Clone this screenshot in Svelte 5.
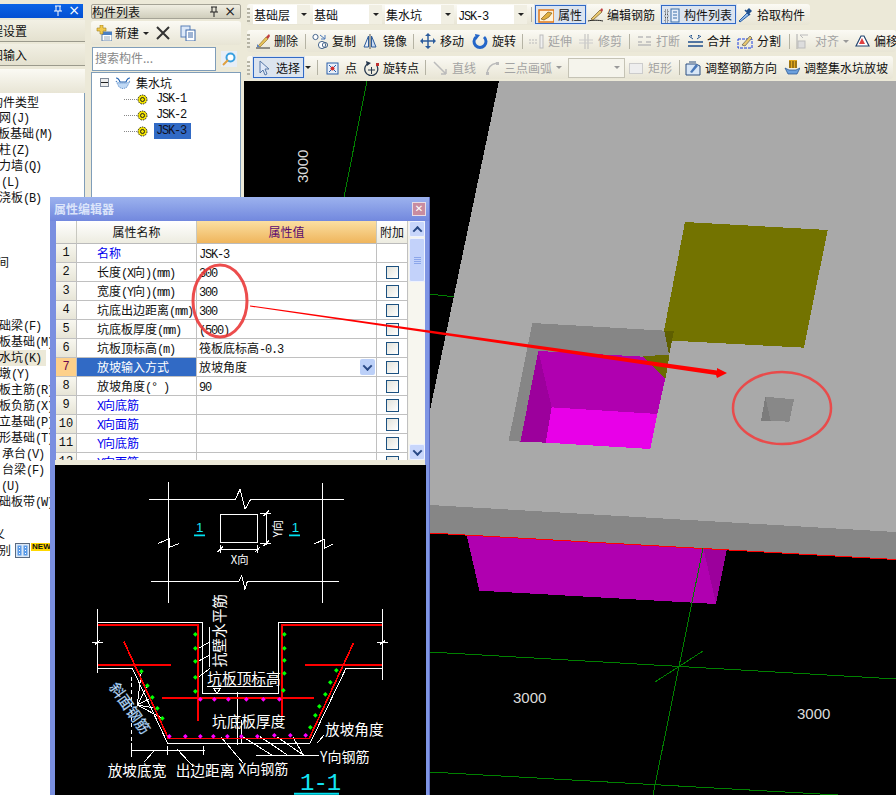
<script>
  const icons = {
    del: '<path d="M2 15h14" stroke="#333"/><path d="M4 13l8-9 2 2-8 8z" fill="#e6c25a" stroke="#8a6a20" stroke-width=".6"/><path d="M12 4l3-3 1 2-2 3z" fill="#c03f3f"/><path d="M3 11l3 3-3 0z" fill="#5a84c8"/>',
    copy: '<circle cx="3.5" cy="4" r="2.6" fill="#fff" stroke="#47668c"/><circle cx="10" cy="12" r="3.6" fill="#fff" stroke="#47668c"/><circle cx="13" cy="12" r="2.6" fill="none" stroke="#47668c"/><path d="M8 2l5 4M13 2v4h-4" stroke="#4a78b8" fill="none"/>',
    mirror: '<path d="M7 1v15" stroke="#555"/><path d="M5.5 3L1 14h4.5z" fill="#e8eef8" stroke="#2c5c9c"/><path d="M8.5 3l4.5 11H8.500z" fill="#c9daf2" stroke="#2c5c9c"/>',
    move: '<path d="M8 1v14M1 8h14" stroke="#2c5c9c" stroke-width="1.500"/><path d="M8 0l3 3H5zM8 16l3-3H5zM0 8l3-3v6zM16 8l-3-3v6z" fill="#2c5c9c"/>',
    rot: '<path d="M4 4a6 6 0 1 0 8 0" fill="none" stroke="#2466c8" stroke-width="3"/><path d="M3 1l5 1-4 5z" fill="#2466c8"/>',
    ext: '<path d="M1 7h8M1 10h8" stroke="#bbb" stroke-dasharray="2 1"/><rect x="12" y="2" width="3" height="13" fill="#f0f0f0" stroke="#bbb"/>',
    trim: '<path d="M7 1v15M10 1v15" stroke="#bbb"/><path d="M1 7h14M1 10h14" stroke="#ccc"/>',
    brk: '<path d="M2 4h5M10 4h5M2 12h13M2 9h4M10 9h5" stroke="#bbb" stroke-width="1.500"/>',
    merge: '<path d="M1 9h15M1 13h15" stroke="#1f4f8c" stroke-width="1.500"/><path d="M2 3l4 3M14 3l-4 3" stroke="#1f4f8c"/><path d="M3 2h2v2zM13 2h-2v2z" fill="#1f4f8c"/>',
    split: '<rect x="1" y="6" width="14" height="9" fill="none" stroke="#1a3fe0" stroke-dasharray="3 1"/><path d="M5 12l8-9 2 2-7 8z" fill="#e8c870" stroke="#444" stroke-width=".6"/>',
    align: '<path d="M2 1v15" stroke="#aaa"/><rect x="3" y="8" width="7" height="7" fill="#ddd" stroke="#bbb"/><path d="M5 2h8M5 2l3 3" stroke="#bbb" fill="none"/>',
    offset: '<path d="M2 13l5-10h3l5 10z" fill="#fff" stroke="#23446e" stroke-width="1.200"/><path d="M5 11l3-6 3 6z" fill="#e04040"/>',
    select: '<path d="M4 1v12l3-3 2 5 2-1-2-5h4z" fill="#dfe8f8" stroke="#5878a8"/>',
    point: '<rect x="2" y="3" width="11" height="11" fill="#e8f0fa" stroke="#2a5ea8"/><path d="M4 5l7 7M11 5l-7 7" stroke="#2a5ea8"/><circle cx="7.500" cy="8.500" r="2" fill="#d03030"/>',
    rotp: '<path d="M6 3a6.500 6.500 0 1 0 8 3" fill="none" stroke="#26384e" stroke-width="1.300"/><path d="M3 1l5 2-4 3z" fill="#26384e"/><path d="M5 10h7M8.500 7v7" stroke="#26384e"/><rect x="13" y="3" width="3" height="3" fill="#c03030"/>',
    line: '<path d="M2 2l12 12M14 14V9M14 14H9" stroke="#bbb" stroke-width="1.500" fill="none"/>',
    arc: '<path d="M3 15C3 8 7 4 13 3" stroke="#bbb" stroke-width="1.500" fill="none"/><rect x="2" y="12" width="3" height="3" fill="#bbb"/><rect x="12" y="2" width="3" height="3" fill="#bbb"/>',
    rect: '<rect x="1.500" y="3.500" width="13" height="10" fill="#eee" stroke="#ccc"/>',
    adj: '<path d="M1 4h10l4 2v9H1z" fill="#d8e6f6" stroke="#2d4f80"/><path d="M5 12l6-8 2 2-6 7z" fill="#4a78b8"/><path d="M4 2h7" stroke="#2d4f80"/>',
    pit: '<path d="M5 0h8v8H5z" fill="#e0a820"/><path d="M6 1v7M9 1v7M12 1v7" stroke="#594008"/><path d="M1 8l3 6h9l3-6-4 2H5z" fill="#6ca0dc" stroke="#1f4f8c" stroke-width=".7"/>',
    prop: '<rect x="1" y="3" width="15" height="12" fill="#fff2d8" stroke="#e07818" stroke-width="1.500"/><path d="M3 12l7-7 4 1-3 4-5 3z" fill="#e0b040" stroke="#6a4a10" stroke-width=".6"/>',
    edit: '<path d="M1 14c3-1 11-1 15 0" stroke="#222" fill="none"/><path d="M4 12l9-9 2 2-9 8z" fill="#e8c870" stroke="#5a4010" stroke-width=".6"/><path d="M13 3l2-2 1 2-1 2z" fill="#c04040"/>',
    list: '<rect x="7" y="2" width="8" height="13" fill="#e6eef9" stroke="#3b6ea8"/><path d="M9 5h4M9 8h4M9 11h4" stroke="#3b6ea8"/><path d="M1 3h3v3H1zM1 7.500h3v3H1zM1 12h3v3H1z" fill="none" stroke="#555" stroke-dasharray="1 1"/>',
    pick: '<path d="M3 15l-1-1 8-8 2 2z" fill="#90b8e8" stroke="#2860a8"/><path d="M9 4l3 3 3-3-3-3z" fill="#1f4f8c"/><path d="M8 3l5 5" stroke="#1f4f8c" stroke-width="1.500"/>',
    newb: '<rect x="6" y="7" width="10" height="9" fill="#fff" stroke="#5c7fa8"/><rect x="6" y="7" width="10" height="3" fill="#4a7fc4"/><path d="M8 12h6M8 14h6" stroke="#9ab"/><path d="M4 0h3v3h3v3H7v3H4V6H1V3h3z" fill="#f2c94c" stroke="#a08020" stroke-width=".6"/>',
    x: '<path d="M2 2l12 12M14 2L2 14" stroke="#333" stroke-width="2"/>',
    dup: '<rect x="1" y="1" width="9" height="11" fill="#dce8f8" stroke="#5a80b8"/><rect x="6" y="5" width="9" height="11" fill="#fff" stroke="#3c68a8"/><path d="M8 8h5M8 10h5M8 12h5" stroke="#3c68a8"/>',
    mag: '<rect width="16" height="16" fill="#e8eef6"/><circle cx="9.500" cy="6.500" r="4" fill="#fff" stroke="#39a0e0" stroke-width="2"/><path d="M7 9l-5 5" stroke="#e0a040" stroke-width="2"/>',
    sump: '<path d="M1 3c2 0 3 1 4 4h6c1-3 2-4 4-4" fill="none" stroke="#2060b0" stroke-width="1.200"/><path d="M1 6l3 6c3 2 5 2 8 0l3-6-3 2H4z" fill="#bfd8f4" stroke="#2060b0" stroke-width=".7" stroke-dasharray="1 1"/>',
    gear: '<circle cx="5.500" cy="5.500" r="4.500" fill="#f2e200" stroke="#222" stroke-dasharray="1.500 1"/><circle cx="5.500" cy="5.500" r="2" fill="none" stroke="#222"/>',
    pin: '<path d="M3 1h6M4 1v5M8 1v5M2 6h8M6 6v5" stroke="currentColor" fill="none"/>'
  };

  function seg(s) {
    return s.split(/([\x00-\x7f°]+)/).filter(Boolean).map((p) => ({ p, la: /^[\x00-\x7f°]/.test(p) }));
  }
  function widths(row, end) {
    return row.map((it, i) => ({ ...it, w: (row[i + 1] ? row[i + 1].x : end) - it.x }));
  }

  const row1 = widths([
    { x: 247, grip: 1 },
    { x: 253, sel: '基础层' }, { x: 313, sel: '基础' }, { x: 385, sel: '集水坑' }, { x: 457, sel: 'JSK-3' },
    { x: 530, sep: 1 },
    { x: 534, i: 'prop', t: '属性', on: 1 }, { x: 587, i: 'edit', t: '编辑钢筋' },
    { x: 660, i: 'list', t: '构件列表', on: 1 }, { x: 737, i: 'pick', t: '拾取构件' }
  ], 810);
  const row2 = widths([
    { x: 247, grip: 1 },
    { x: 254, i: 'del', t: '删除' }, { x: 304, sep: 1 }, { x: 312, i: 'copy', t: '复制' },
    { x: 363, i: 'mirror', t: '镜像' }, { x: 412, sep: 1 }, { x: 420, i: 'move', t: '移动' },
    { x: 472, i: 'rot', t: '旋转' }, { x: 521, sep: 1 }, { x: 528, i: 'ext', t: '延伸', d: 1 },
    { x: 578, i: 'trim', t: '修剪', d: 1 }, { x: 628, sep: 1 }, { x: 636, i: 'brk', t: '打断', d: 1 },
    { x: 687, i: 'merge', t: '合并' }, { x: 737, i: 'split', t: '分割' }, { x: 788, sep: 1 },
    { x: 795, i: 'align', t: '对齐', d: 1, dd: 1 }, { x: 854, i: 'offset', t: '偏移' }
  ], 910);
  const row3 = widths([
    { x: 247, grip: 1 },
    { x: 252, i: 'select', t: '选择', on: 1 }, { x: 305, dd: 1 }, { x: 316, sep: 1 },
    { x: 325, i: 'point', t: '点' }, { x: 363, i: 'rotp', t: '旋转点' }, { x: 424, sep: 1 },
    { x: 432, i: 'line', t: '直线', d: 1 }, { x: 484, i: 'arc', t: '三点画弧', d: 1 }, { x: 556, dd: 1, d: 1 },
    { x: 568, box: 1 }, { x: 628, i: 'rect', t: '矩形', d: 1 }, { x: 678, sep: 1 },
    { x: 685, i: 'adj', t: '调整钢筋方向' }, { x: 784, i: 'pit', t: '调整集水坑放坡' }
  ], 893);
  const rows = [row1, row2, row3];

  const sideRows = [
    { t: '构件类型', off: -9 }, { t: '网(J)' }, { t: '板基础(M)', off: -2 }, { t: '柱(Z)' }, { t: '力墙(Q)' },
    { t: '(L)', off: 1 }, { t: '浇板(B)' }, {}, {}, {}, { t: '间', off: -3 }, {}, {}, {},
    { t: '础梁(F)' }, { t: '板基础(M)', off: -1 }, { t: '水坑(K)', cur: 1 }, { t: '墩(Y)' },
    { t: '板主筋(R)' }, { t: '板负筋(X)' }, { t: '立基础(P)' }, { t: '形基础(T)' }, { t: '承台(V)', off: 2 },
    { t: '台梁(F)', off: 2 }, { t: '(U)', off: 1 }, { t: '础板带(W)', off: -1 }, {}, { t: '义', off: -7 }, { t: '别', off: -1, extra: 1 }
  ];

  const props = [
    ['名称', 'JSK-3', 1, 0], ['长度(X向)(mm)', '300', 0, 1], ['宽度(Y向)(mm)', '300', 0, 1],
    ['坑底出边距离(mm)', '300', 0, 1], ['坑底板厚度(mm)', '(500)', 0, 1], ['坑板顶标高(m)', '筏板底标高-0.3', 0, 1],
    ['放坡输入方式', '放坡角度', 0, 1], ['放坡角度(° )', '90', 0, 1], ['X向底筋', '', 1, 1],
    ['X向面筋', '', 1, 1], ['Y向底筋', '', 1, 1], ['Y向面筋', '', 1, 1]
  ];

  const greens = [[436,523],[436,565],[436,604],[436,652],[436,694],[703,523],[703,565],[703,601],[703,640],[700,691],[274,634],[292,677],[307,712],[322,745],[337,775],[859,631],[841,667],[826,703],[808,739],[796,766],[781,802]];
  const pinks = [[451,718],[493,718],[535,718],[589,718],[640,718],[688,718],[358,829],[406,829],[451,829],[490,829],[532,829],[574,829],[622,829],[673,826],[721,826],[767,826]];
</script>

<div class="root">
  <section class="side">
    <div class="ptitle blue">
      <svg class="pin" viewBox="0 0 12 12">{@html icons.pin}</svg><span class="cl">×</span>
    </div>
    <div class="navbtn"><span class="offa">工程设置</span></div>
    <div class="navbtn"><span class="offa">绘图输入</span></div>
    <div class="sidebar-strip"></div>
    <div class="sidelist">
      {#each sideRows as r}
        <div class="srow" class:cur={r.cur}>
          {#if r.t}
            <span class="stext" style="margin-left:{r.off ?? -1}px">
              {#each seg(r.t) as s}<span class:la={s.la}>{s.p}</span>{/each}
            </span>
          {/if}
          {#if r.extra}
            <svg class="grid-ic" width="15" height="15" viewBox="0 0 15 15"><rect x=".5" y=".5" width="14" height="14" fill="#dce8f6" stroke="#5a6a80"/><rect x="2.500" y="2.500" width="4" height="10" fill="#5b9be8"/><rect x="8.500" y="2.500" width="4" height="10" fill="#5b9be8"/><path d="M4.500 4v7M10.500 4v7" stroke="#fff" stroke-dasharray="1 2"/></svg>
            <span class="newtag">NEW</span>
          {/if}
        </div>
      {/each}
    </div>
  </section>

  <section class="mid">
    <div class="ptitle grey">
      <span class="ptext">构件列表</span><svg class="pin dark" viewBox="0 0 12 12">{@html icons.pin}</svg><span class="cl dark">×</span>
    </div>
    <div class="midbar">
      <svg class="ic" viewBox="0 0 16 16">{@html icons.newb}</svg>
      <span class="newl">新建</span><span class="tri dk"></span>
      <svg class="ic x" viewBox="0 0 16 16">{@html icons.x}</svg>
      <svg class="ic" viewBox="0 0 16 16">{@html icons.dup}</svg>
    </div>
    <div class="searchrow">
      <div class="search">搜索构件...</div>
      <svg class="ic" viewBox="0 0 16 16">{@html icons.mag}</svg>
    </div>
    <div class="tree">
      <div class="troot">
        <span class="minus"></span>
        <svg class="ic" viewBox="0 0 16 16">{@html icons.sump}</svg>
        <span class="trl">集水坑</span>
      </div>
      {#each ['JSK-1', 'JSK-2', 'JSK-3'] as n, i}
        <div class="tchild">
          <span class="dots"></span>
          <svg class="gear" viewBox="0 0 11 11">{@html icons.gear}</svg>
          <span class="tname la" class:sel={i === 2}>{n}</span>
        </div>
      {/each}
    </div>
  </section>

  <section class="main">
    <div class="bars">
      {#each rows as row, ri}
        <div class="tbar r{ri}">
          {#each row as it}
            <div class="item" class:on={it.on} class:dis={it.d} style="width:{it.w}px">
              {#if it.grip}
                <span class="grip"></span>
              {:else if it.sep}
                <span class="sep"></span>
              {:else if it.sel}
                <span class="sel-box">
                  <span class="sel-t">{#each seg(it.sel) as s}<span class:la={s.la}>{s.p}</span>{/each}</span>
                  <span class="sel-a"><span class="tri dk"></span></span>
                </span>
              {:else if it.box}
                <span class="blank"><span class="tri"></span></span>
              {:else}
                {#if it.i}<svg class="ic" viewBox="0 0 16 16">{@html icons[it.i]}</svg>{/if}
                {#if it.t}<span class="lbl">{it.t}</span>{/if}
                {#if it.dd}<span class="tri" class:dk={!it.d}></span>{/if}
              {/if}
            </div>
          {/each}
        </div>
      {/each}
    </div>
    <div class="canvas">
      <svg class="scene" viewBox="244 81 652 714">
        <line x1="367" y1="81" x2="344" y2="197" stroke="#008000"/>
        <line x1="430" y1="294" x2="455" y2="297" stroke="#008000"/>
        <g transform="translate(430 200) scale(.33333)">
          <polygon points="110,1005 148,1172 858,1212 890,1050" fill="#b000b0"/>
          <polygon points="820,1045 890,1050 858,1210" fill="#9c009c"/>
        </g>
        <polygon points="499,81 896,81 896,532 430,505 430,410" fill="#a9a9a9"/>
        <polygon points="430,505 896,532 896,559 430,533" fill="#868686"/>
        <line x1="430" y1="533" x2="896" y2="559.500" stroke="#ff0000"/>
        <g transform="translate(430 200) scale(.33333)">
          <polygon points="765,66 1193,90 1122,443 726,422 732,393 702,392" fill="#737300"/>
          <polygon points="702,392 732,393 717,465" fill="#5f5f00"/>
          <polygon points="307,369 703,392 717,465 640,470 325,453 272,725 236,722" fill="#868686"/>
          <polygon points="636,468 717,465 717,476 706,538" fill="#6b6b00"/>
          <polygon points="325,453 640,470 706,535 682,642 365,622" fill="#b000b0"/>
          <polygon points="365,622 682,642 661,747 347,728" fill="#e800e8"/>
          <polygon points="325,453 365,622 347,728 271,725" fill="#9c009c"/>
          <polygon points="1006,590 1092,598 1078,665 993,662" fill="#888888"/>
          <polygon points="1006,590 1022,662 993,662" fill="#7c7c7c"/>
        </g>
        <g stroke="#008000" fill="none">
          <line x1="703" y1="548" x2="653" y2="795"/>
          <line x1="430" y1="652" x2="896" y2="679"/>
          <line x1="430" y1="772" x2="838" y2="795"/>
          <line x1="655" y1="682" x2="703" y2="651"/>
        </g>
        <g class="dim">
          <text x="513" y="703">3000</text>
          <text x="797" y="719">3000</text>
          <text transform="translate(308 183) rotate(-90)">3000</text>
        </g>
      </svg>
    </div>
  </section>

  <div class="dialog">
    <div class="dtitle">
      <span>属性编辑器</span>
      <span class="dclose">✕</span>
    </div>
    <div class="dbody">
      <div class="ptable">
        <div class="phead">
          <div class="c0"></div>
          <div class="c1">属性名称</div>
          <div class="c2">属性值</div>
          <div class="c3">附加</div>
        </div>
        {#each props as p, i}
          <div class="prow" class:act={i === 6}>
            <div class="c0 la">{i + 1}</div>
            <div class="c1" class:link={p[2]}>
              {#each seg(p[0]) as s}<span class:la={s.la}>{s.p}</span>{/each}
            </div>
            <div class="c2">
              {#each seg(p[1]) as s}<span class:la={s.la}>{s.p}</span>{/each}
              {#if i === 6}<span class="ddbtn"><span class="chev"></span></span>{/if}
            </div>
            <div class="c3">{#if p[3]}<span class="chk"></span>{/if}</div>
          </div>
        {/each}
      </div>
      <div class="vsb">
        <div class="sbtn"><span class="chev up"></span></div>
        <div class="thumb"><span class="lines"></span></div>
        <div class="strack"></div>
        <div class="sbtn"><span class="chev"></span></div>
      </div>
    </div>
    <div class="dstrip"></div>
    <svg class="cad" viewBox="15 15 1113 990">
      <g fill="none" stroke="#fff" stroke-width="3" shape-rendering="crispEdges">
        <path d="M297 118H556L570 88L585 148L602 118H882"/>
        <path d="M303 364H566L575 346L585 388L592 364H867"/>
        <path d="M355 66V428M817 70V428"/>
        <path d="M325 250L358 236V262L388 250"/>
        <path d="M793 252L822 238V266L849 252"/>
        <rect x="511" y="163" width="112" height="85"/>
        <path d="M630 160H662M630 250H662M648 157V254M640 168L656 152M640 258L656 242"/>
        <path d="M511 255V280M623 255V280M506 268H628M503 276L519 260M615 276L631 260"/>
        <path d="M143 447V640M997 447V660M127 547H158M982 547H1014M135 553L150 541M990 553L1006 541"/>
        <path d="M143 488H457V700H685V488H997"/>
        <path d="M143 625H247L353 850H780L888 625H997"/>
        <path d="M470 680H668"/>
        <path d="M490 684H512L501 700Z"/>
        <path d="M562 695V855M575 780V850"/>
        <path d="M245 650V860" stroke-dasharray="12 8"/>
        <path d="M243 870H465M243 858V892M353 858V885M460 858V885"/>
        <path d="M283 906L312 872M380 866L430 920"/>
        <path d="M512 830L580 910M578 830L665 885M630 830L712 885M680 830L760 885M728 830L760 885M618 885H808"/>
        <path d="M440 568L480 545M440 606L480 585M440 655L480 625M478 500V620"/>
        <path d="M262 735L274 634M262 735L292 677M262 735L307 712M262 735L322 745M262 735L337 775"/>
        <path d="M800 850C812 838 818 830 820 826"/>
      </g>
      <g fill="none" stroke="#ff0000" stroke-width="5" shape-rendering="crispEdges">
        <path d="M143 494H443V782"/>
        <path d="M997 494H695V770"/>
        <path d="M143 614H363M765 614H997M336 714H792"/>
        <path d="M222 545L355 835H778L910 550"/>
      </g>
      {#each greens as [x, y]}<rect x={x - 5} y={y - 5} width="10" height="10" fill="#00ff00" transform="rotate(45 {x} {y})"/>{/each}
      {#each pinks as [x, y]}<rect x={x - 5} y={y - 5} width="10" height="10" fill="#ff00ff" transform="rotate(45 {x} {y})"/>{/each}

      <g class="cadt">
        <text x="542" y="312" font-size="34">X向</text>
        <text transform="translate(696 232) rotate(-90)" font-size="34">Y向</text>
        <text transform="translate(526 622) rotate(-90)" font-size="44">抗壁水平筋</text>
        <text x="472" y="672" font-size="44">坑板顶标高</text>
        <text x="486" y="800" font-size="44">坑底板厚度</text>
        <text x="825" y="824" font-size="44">放坡角度</text>
        <text x="810" y="905" font-size="42">Y向钢筋</text>
        <text x="565" y="942" font-size="42">X向钢筋</text>
        <text x="173" y="948" font-size="44">放坡底宽</text>
        <text x="377" y="948" font-size="44">出边距离</text>
      </g>
      <text class="slant" transform="translate(176 682) rotate(55)" font-size="44">斜面钢筋</text>
      <g class="cyan">
        <text x="438" y="216" font-size="40">1</text>
        <text x="725" y="216" font-size="40">1</text>
        <text class="big" x="750" y="990" font-size="72">1-1</text>
      </g>
      <path d="M432 226H465M717 226H750" stroke="#00e0f0" stroke-width="5"/>
      <path d="M732 1001H867" stroke="#00e0f0" stroke-width="6"/>
    </svg>
  </div>

  <svg class="notes" viewBox="0 0 896 795">
    <ellipse cx="220" cy="301" rx="27" ry="36" fill="none" stroke="#ea3a3a" stroke-width="3" opacity=".9"/>
    <ellipse cx="782" cy="408" rx="49" ry="36" fill="none" stroke="#f04040" stroke-width="2.500" opacity=".9"/>
    <polygon points="250,305.500 717,370.500 717,368 727,373 717,378 716,375 250,306.500" fill="#ff0000"/>
  </svg>
</div>

<style>
  :global(body) { margin: 0; }
  .root {
    position: relative;
    width: 896px;
    height: 795px;
    overflow: hidden;
    background: #ece9d8;
    display: flex;
    font: 12px/16px "Noto Sans CJK SC", "Liberation Sans", sans-serif;
    color: #111;
  }
  .la { font-family: "Liberation Mono", "DejaVu Sans Mono", monospace; font-size: 12px; letter-spacing: -1.200px; }

  .side { width: 85px; margin-right: 6px; display: flex; flex-direction: column; padding-top: 4px; box-sizing: border-box; flex: none; }
  .mid { width: 150px; margin-right: 3px; display: flex; flex-direction: column; padding-top: 4px; box-sizing: border-box; flex: none; }
  .main { flex: 1; min-width: 0; display: flex; flex-direction: column; }

  .ptitle { height: 14px; display: flex; align-items: center; position: relative; flex: none; }
  .ptitle.blue { background: linear-gradient(#0a63e6, #0450d2); margin-right: 2px; }
  .ptitle.grey { background: linear-gradient(#f0eee2, #d0cebc); border: 1px solid #a5a396; border-radius: 2px; box-sizing: border-box; height: 15px; }
  .ptext { overflow: hidden; white-space: nowrap; line-height: 13px; }
  .pin { position: absolute; right: 19px; top: 1px; width: 12px; height: 12px; color: #fff; }
  .cl { position: absolute; top: -1px; right: 3px; font: 14px/14px "DejaVu Sans", sans-serif; color: #fff; }
  .pin.dark, .cl.dark { color: #222; }
  .pin.dark { right: 20px; }
  .cl.dark { right: 4px; }

  .navbtn { height: 21px; margin: 2px 0 0; background: linear-gradient(#f2f0e4, #e4e1cf); border-bottom: 1px solid #9b9a8c; overflow: hidden; line-height: 22px; white-space: nowrap; flex: none; }
  .offa { display: block; margin-left: -21px; }
  .sidebar-strip { height: 24px; margin-top: 3px; background: linear-gradient(#fbfaf4, #e8e5d5); flex: none; }
  .sidelist { flex: 1; background: #fff; border-right: 1px solid #7f9db9; overflow: hidden; padding-top: 1px; }
  .srow { height: 16px; display: flex; align-items: center; white-space: nowrap; overflow: hidden; }
  .srow.cur { background: linear-gradient(to right, #ece9d8 46px, #fff 46px); }
  .grid-ic { margin-left: 4px; flex: none; }
  .newtag { margin: -6px 0 0 1px; background: #ffd800; color: #111; font: bold 8px/8px "Liberation Sans", sans-serif; padding: 0 1px; }

  .midbar { height: 24px; margin-top: 2px; display: flex; align-items: center; padding-left: 5px; background: linear-gradient(#fbfaf4, #e8e5d5); border-radius: 3px; flex: none; }
  .newl { margin-left: 3px; }
  .ic { width: 16px; height: 16px; flex: none; }
  .midbar .tri { margin: 0 6px 0 4px; }
  .midbar .x { margin-right: 9px; }
  .searchrow { height: 25px; margin-top: 1px; display: flex; align-items: center; gap: 5px; flex: none; }
  .search { width: 124px; height: 24px; box-sizing: border-box; background: #fff; border: 1px solid #7f9db9; color: #888; line-height: 20px; padding-left: 2px; margin-left: 1px; }
  .tree { flex: 1; background: #fff; border: 1px solid #7f9db9; border-bottom: 0; margin-top: 1px; padding-top: 1px; }
  .troot { display: flex; align-items: center; height: 17px; padding-left: 8px; }
  .minus { width: 9px; height: 9px; box-sizing: border-box; border: 1px solid #7f8a99; background: linear-gradient(to bottom, transparent 3px, #222 3px, #222 4px, transparent 4px), #eee; margin-right: 6px; }
  .trl { margin-left: 5px; }
  .tchild { display: flex; align-items: center; height: 16px; padding-left: 32px; }
  .dots { width: 13px; border-top: 1px dotted #888; }
  .gear { width: 11px; height: 11px; margin-right: 6px; flex: none; }
  .tname { padding: 0 2px; height: 16px; line-height: 16px; }
  .tname.sel { background: #316ac5; width: 33px; color: #112; }

  .bars { height: 81px; flex: none; padding: 4px 0 0 3px; box-sizing: border-box; display: flex; flex-direction: column; }
  .tbar { display: flex; align-items: center; background: linear-gradient(#fbfaf4, #e8e5d5); border-radius: 3px; overflow: hidden; flex: none; }
  .tbar.r0 { height: 21px; width: 563px; }
  .tbar.r1 { height: 22px; margin-top: 5px; width: 649px; }
  .tbar.r2 { height: 23px; margin-top: 4px; width: 646px; }
  .item { display: flex; align-items: center; gap: 4px; height: 100%; box-sizing: border-box; flex: none; white-space: nowrap; }
  .item.on { background: #dce4ef; outline: 1px solid #316ac5; outline-offset: -2px; padding-left: 4px; }
  .item.dis { color: #a3a3a3; }
  .grip { width: 3px; height: 14px; background: repeating-linear-gradient(#b5b3a4 0 2px, transparent 2px 4px); }
  .sep { width: 1px; height: 15px; background: #b5b3a4; margin-left: 1px; }
  .sel-box { display: flex; height: 19px; width: calc(100% - 3px); background: #fff; }
  .sel-t { flex: 1; padding-left: 1px; line-height: 19px; overflow: hidden; }
  .sel-a { width: 13px; background: #f1efe3; display: flex; align-items: center; justify-content: center; }
  .blank { width: 57px; height: 20px; box-sizing: border-box; border: 1px solid #c5c3b5; background: #f5f4ec; display: flex; align-items: center; justify-content: flex-end; padding-right: 4px; }
  .tri { width: 0; height: 0; border: 3px solid transparent; border-top: 3px solid #999; border-bottom: 0; }
  .tri.dk { border-top-color: #222; }

  .canvas { flex: 1; background: #000; min-height: 0; }
  .scene { display: block; width: 100%; height: 100%; shape-rendering: crispEdges; }
  .dim text { fill: #dcdcdc; font: 15px "Liberation Sans", sans-serif; }

  .dialog { position: absolute; left: 50px; top: 197px; width: 380px; height: 598px; box-sizing: border-box; background: linear-gradient(to right, #7a8fe0, #7f95e4); border-right: 1px solid #5a6ac0; display: flex; flex-direction: column; }
  .dtitle { height: 24px; flex: none; display: flex; align-items: center; justify-content: space-between; padding: 0 3px 0 4px; color: #dbe4fa; font-weight: 700; background: linear-gradient(#9cb2ee, #7288de); }
  .dclose { width: 14px; height: 14px; background: #c88ca0; border: 1px solid #e9dde4; box-sizing: border-box; color: #fff; font: bold 10px/12px "DejaVu Sans", sans-serif; text-align: center; }
  .dbody { height: 239px; flex: none; display: flex; margin-left: 6px; margin-right: 4px; background: #f4f3ea; overflow: hidden; }
  .ptable { width: 352px; background: #fff; overflow: hidden; flex: none; }
  .phead, .prow { display: grid; grid-template-columns: 21px 120px 180px 31px; }
  .phead { height: 23px; text-align: center; line-height: 22px; background: linear-gradient(#fff, #ecebdf); }
  .phead > div { border-right: 1px solid #c8c8c0; border-bottom: 1px solid #bbb; }
  .phead .c2 { background: linear-gradient(#fbdfa2, #efb55c); color: #5a0a70; }
  .prow { height: 19px; line-height: 18px; }
  .prow > div { border-right: 1px solid #c0c0c0; border-bottom: 1px solid #c0c0c0; box-sizing: border-box; overflow: hidden; white-space: nowrap; position: relative; }
  .prow .c0 { text-align: center; background: linear-gradient(#f8f7ef, #e7e5d7); letter-spacing: 0; }
  .prow .c1 { padding-left: 20px; }
  .prow .c2 { padding-left: 2px; }
  .prow .c3 { display: flex; align-items: center; justify-content: center; }
  .prow.act .c0 { background: #fdd08a; color: #6a0a50; }
  .prow.act .c1 { background: #316ac5; color: #fff; }
  .link { color: #0000ee; }
  .chk { width: 13px; height: 13px; box-sizing: border-box; border: 1px solid #1c5180; background: linear-gradient(135deg, #e2e2da, #fff); }
  .ddbtn { position: absolute; right: 1px; top: 1px; width: 15px; height: 16px; background: #bcd0f8; border-radius: 2px; display: flex; align-items: center; justify-content: center; }
  .chev { width: 5px; height: 5px; border: solid #2a4a86; border-width: 0 2px 2px 0; transform: rotate(45deg) translate(-1px, -1px); }
  .chev.up { transform: rotate(225deg) translate(-1px, -1px); }
  .vsb { width: 16px; margin-left: 1px; display: flex; flex-direction: column; flex: none; }
  .sbtn { height: 16px; background: #c8d6fb; border: 1px solid #eef2fe; box-sizing: border-box; border-radius: 2px; display: flex; align-items: center; justify-content: center; flex: none; }
  .thumb { height: 44px; margin-top: 1px; background: #c3d2fa; border: 1px solid #eef2fe; box-sizing: border-box; border-radius: 2px; display: flex; align-items: center; justify-content: center; flex: none; }
  .lines { width: 7px; height: 7px; background: repeating-linear-gradient(#8ba6ea 0 1px, transparent 1px 2px); }
  .strack { flex: 1; background: #f7f6ef; }
  .dstrip { height: 5px; margin-left: 5px; margin-right: 4px; background: #ece9d8; flex: none; }
  .cad { display: block; width: 371px; height: 330px; margin-left: 5px; background: #000; flex: none; }
  .cadt text { fill: #fff; }
  .slant { fill: #e8f2ff; stroke: #4a90d0; stroke-width: 1; }
  .cyan text { fill: #14e4f4; font-family: "Liberation Sans", sans-serif; }
  .cyan .big { font-family: "Liberation Mono", monospace; letter-spacing: -3px; }
  .notes { position: absolute; left: 0; top: 0; width: 896px; height: 795px; pointer-events: none; }
</style>
